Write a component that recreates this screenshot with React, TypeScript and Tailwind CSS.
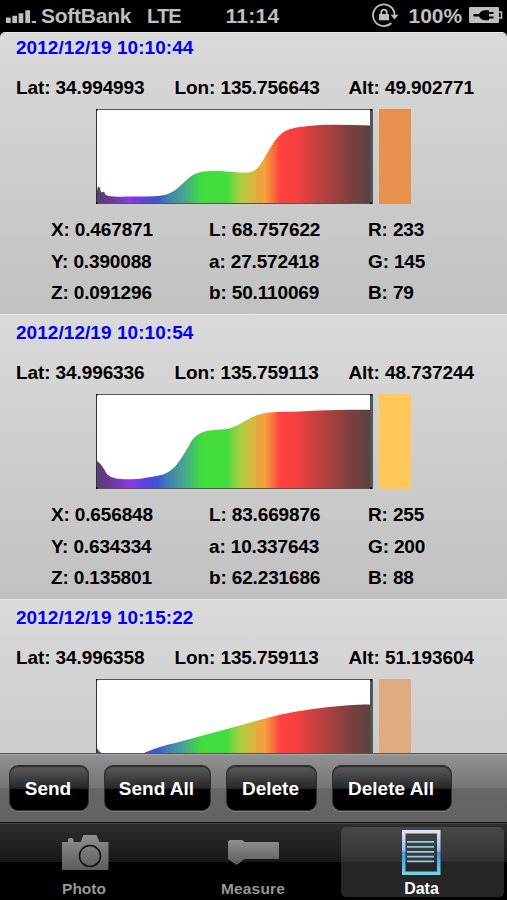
type Point = [number, number];

type Measurement = {
  date: string;
  lat: string;
  lon: string;
  alt: string;
  values: string[][];
  swatch: string;
  curve: Point[];
};

const measurements: Measurement[] = [
  {
    date: "2012/12/19 10:10:44",
    lat: "34.994993",
    lon: "135.756643",
    alt: "49.902771",
    values: [
      ["X: 0.467871", "L: 68.757622", "R: 233"],
      ["Y: 0.390088", "a: 27.572418", "G: 145"],
      ["Z: 0.091296", "b: 50.110069", "B: 79"]
    ],
    swatch: "#e8914f",
    curve: [
      [1, 82], [2, 78], [4, 79], [5, 83], [8, 83], [10, 86], [18, 87.5], [38, 87.5], [57, 87.3], [67, 86.3],
      [74, 84], [81, 79.7], [94, 68], [104, 63.3], [112, 62.3], [127, 62.2], [141, 63.3], [151, 63.6], [157, 62.2],
      [162, 58.5], [167, 51.3], [174, 39.6], [181, 29], [191, 21.3], [204, 18], [221, 16.2], [237, 15.8], [275, 16.5]
    ]
  },
  {
    date: "2012/12/19 10:10:54",
    lat: "34.996336",
    lon: "135.759113",
    alt: "48.737244",
    values: [
      ["X: 0.656848", "L: 83.669876", "R: 255"],
      ["Y: 0.634334", "a: 10.337643", "G: 200"],
      ["Z: 0.135801", "b: 62.231686", "B: 88"]
    ],
    swatch: "#ffc858",
    curve: [
      [1, 67], [4, 69.5], [8, 75], [11, 80], [16, 83.3], [24, 85], [41, 85], [51, 83.5], [67, 80.5], [77, 74.5],
      [84, 66], [91, 55], [97, 45], [106, 38.5], [114, 36.5], [131, 35], [141, 31.5], [151, 26], [162, 20.8],
      [174, 18.5], [204, 17.5], [231, 16.2], [275, 15.8]
    ]
  },
  {
    date: "2012/12/19 10:15:22",
    lat: "34.996358",
    lon: "135.759113",
    alt: "51.193604",
    values: [],
    swatch: "#dfac82",
    curve: [
      [1, 69], [4, 73], [20, 80], [40, 77], [49, 73.5], [64, 68], [94, 60], [131, 50], [167, 40], [184, 35.7],
      [217, 30], [244, 27], [261, 25.8], [275, 25.5]
    ]
  }
];

const spectrum: [number, string][] = [
  [0, "#54406c"], [16, "#6e38a0"], [34, "#8c38e6"], [48, "#5f42e0"], [62, "#3f55d4"], [72, "#4080b4"],
  [88, "#46a68c"], [100, "#42cc58"], [106, "#42dc3c"], [131, "#42dc3c"], [138, "#7ed440"], [146, "#b4cc40"],
  [156, "#d4b840"], [163, "#eaa63e"], [169, "#f8a040"], [177, "#fa7038"], [184, "#ff4040"], [198, "#fa403e"],
  [222, "#c24040"], [255, "#7c4040"], [275, "#584242"]
];

// Catmull-Rom through the sampled points, closed along the baseline
function areaPath(points: Point[]) {
  let d = `M1 94L${points[0][0]} ${points[0][1]}`;
  for (let i = 0; i < points.length - 1; i++) {
    const a = points[Math.max(i - 1, 0)];
    const b = points[i];
    const c = points[i + 1];
    const e = points[Math.min(i + 2, points.length - 1)];
    // tangents are scaled to the step so uneven samples do not overshoot
    const step = c[0] - b[0];
    const m1 = (c[1] - a[1]) / (c[0] - a[0]);
    const m2 = (e[1] - b[1]) / (e[0] - b[0]);
    d += `C${b[0] + step / 3} ${b[1] + (m1 * step) / 3} ${c[0] - step / 3} ${c[1] - (m2 * step) / 3} ${c[0]} ${c[1]}`;
  }
  return `${d}V94Z`;
}

function SpectrumChart({ curve, id }: { curve: Point[]; id: string }) {
  return (
    <svg className="block" width="277" height="95" viewBox="0 0 277 95">
      <defs>
        <linearGradient id={id} gradientUnits="userSpaceOnUse" x1="0" y1="0" x2="275" y2="0">
          {spectrum.map(([x, color]) => (
            <stop key={x} offset={x / 275} stopColor={color} />
          ))}
        </linearGradient>
      </defs>
      <rect width="277" height="95" fill="#fff" />
      <path d={areaPath(curve)} fill={`url(#${id})`} />
      <path d="M0 .5H277M0 94.5H277" stroke="#555" />
      <path d="M.5 0V95" stroke="#333" />
      <path d="M275.5 0V95" stroke="#555" strokeWidth="3" />
      <path d="M0 0H1.5V1.5H0ZM274 0H276V1.5H274ZM0 93.5H1.5V95H0ZM274 93.5H276V95H274Z" fill="#000" />
    </svg>
  );
}

function MeasurementRow({ item, index }: { item: Measurement; index: number }) {
  return (
    <section className="h-[285px] shrink-0 border-t border-[#e9e9e9] bg-linear-to-b from-[#dadada] to-[#c1c1c1] text-[19px] leading-[22px] font-bold tracking-[-0.1px] whitespace-nowrap text-black">
      <h2 className="pt-[7px] pl-4 tracking-[0.05px] text-[#0202ee]">{item.date}</h2>
      <div className="mt-[18px] grid grid-cols-[158.5px_174px_1fr] pl-4">
        <span>Lat: {item.lat}</span>
        <span>Lon: {item.lon}</span>
        <span>Alt: {item.alt}</span>
      </div>
      <div className="mt-[10px] ml-24 flex gap-[6px]">
        <SpectrumChart curve={item.curve} id={`spectrum-${index}`} />
        <div className="h-[95px] w-[32px]" style={{ backgroundColor: item.swatch }} />
      </div>
      <div className="mt-[15px] grid grid-cols-[158px_159px_1fr] gap-y-[9.5px] pl-[51px] tracking-[-0.15px]">
        {item.values.flat().map((value) => (
          <span key={value}>{value}</span>
        ))}
      </div>
    </section>
  );
}

function StatusBar() {
  return (
    <header className="flex h-8 shrink-0 items-center bg-black text-[21px] leading-8 font-bold whitespace-nowrap text-[#bfbfbf]">
      <svg className="ml-1.5 shrink-0" width="30" height="32" viewBox="0 0 30 32" fill="#bfbfbf">
        <path d="M0 17.500H4.700V23H0ZM6.300 15.700H11V23H6.300ZM12.600 13.300H17.300V23H12.600ZM19.300 10.300H24V23H19.300ZM25.700 21H30V23H25.700Z" />
      </svg>
      <span className="ml-[5px] w-[106px] tracking-[-0.25px]">SoftBank</span>
      <span className="w-[78.500px] text-[20px] tracking-[-0.8px]">LTE</span>
      <span className="w-[145px] tracking-[0.300px]">11:14</span>
      <svg className="shrink-0" width="29" height="32" viewBox="0 0 29 32">
        <path d="M20.300 23A10.800 10.800 0 1 1 23.600 15" fill="none" stroke="#bfbfbf" strokeWidth="1.800" />
        <path d="M19.500 14.800H27.500L23.500 19.500Z" fill="#bfbfbf" />
        <path d="M8 14H18V20.300H8Z" fill="#bfbfbf" />
        <path d="M10.300 14V12.300A2.700 2.700 0 0 1 15.700 12.300V14" fill="none" stroke="#bfbfbf" strokeWidth="1.800" />
      </svg>
      <span className="ml-[9px] w-[60px]">100%</span>
      <svg className="shrink-0" width="34" height="32" viewBox="0 0 34 32">
        <path d="M0 8Q0 7 1 7H29Q30 7 30 8V22Q30 23 29 23H1Q0 23 0 22Z" fill="#bfbfbf" />
        <path d="M30 12H32.500V18H30" fill="none" stroke="#bfbfbf" strokeWidth="1.500" />
        <path d="M4.500 14H10Q12 10.500 16 10.300H20V12H24.500V14H20V16.500H24.500V18.500H20V20.200H16Q12 20 10 16.500H4.500Z" fill="#000" />
      </svg>
    </header>
  );
}

function Toolbar() {
  const button =
    "h-[46px] rounded-[9px] border border-[#303030] bg-[linear-gradient(#5c5c5c_0%,#262626_51%,#000_52%,#000_100%)] pt-0.5 pr-0.5 text-[19px] font-bold text-white shadow-[0_1px_0_#808080,inset_0_1px_1px_#222]";

  return (
    <div className="flex h-[70px] shrink-0 items-start border-t border-b border-t-[#555] border-b-[#111] bg-[linear-gradient(#929292,#757575_50%,#666_51%,#626262)] pt-[11px] pl-[9px] shadow-[inset_0_1px_0_#a5a5a5]">
      <button className={`${button} w-20`}>Send</button>
      <button className={`${button} ml-[15px] w-[107px]`}>Send All</button>
      <button className={`${button} ml-[15px] w-[91px]`}>Delete</button>
      <button className={`${button} ml-[15px] w-[120px]`}>Delete All</button>
    </div>
  );
}

function TabBar() {
  return (
    <nav className="grid h-[77px] shrink-0 grid-cols-3 border-t border-[#444] bg-[linear-gradient(#2e2e2e_0%,#171717_50%,#000_50%,#000_100%)] text-center text-[15.500px] leading-5 font-bold text-[#969696]">
      <div className="flex flex-col items-center">
        <svg className="mt-[10px] shrink-0" width="48" height="37" viewBox="0 0 48 37">
          <defs>
            <linearGradient id="gray" x1="0" y1="0" x2="0" y2="1">
              <stop offset="0" stopColor="#909090" />
              <stop offset="1" stopColor="#5c5c5c" />
            </linearGradient>
          </defs>
          <path d="M1 8H7V5L8.500 4H11L12.500 5V8H19.500L22.500 1H35.500L38.500 8H47.500V36H1Z" fill="url(#gray)" />
          <circle cx="29" cy="22" r="10.500" fill="none" stroke="#111" strokeWidth="1.600" />
        </svg>
        <span className="mt-[8px] mr-px">Photo</span>
      </div>
      <div className="flex flex-col items-center">
        <svg className="mt-[15px] shrink-0" width="53" height="27" viewBox="0 0 53 27">
          <path d="M1 2L3 1H15L18 3H51L52 4V20H17.500L9.500 26L1 20Z" fill="url(#gray)" />
        </svg>
        <span className="mt-[13px] mr-px tracking-[0.150px]">Measure</span>
      </div>
      <div className="mt-[3px] mr-[3px] ml-[3px] flex h-[70px] flex-col items-center rounded-[5px] bg-[linear-gradient(#474747_0%,#333_49%,#262626_50%,#262626_100%)] text-white">
        <svg className="mt-[2px] mr-[3px] shrink-0" width="40" height="47" viewBox="0 0 40 47">
          <defs>
            <linearGradient id="blue" x1="0" y1="0" x2="0" y2="1">
              <stop offset="0" stopColor="#e4e6fa" />
              <stop offset=".45" stopColor="#98c0ec" />
              <stop offset=".5" stopColor="#3c98e0" />
              <stop offset="1" stopColor="#6cd8f0" />
            </linearGradient>
          </defs>
          <path d="M1 1H39.500V46H1ZM4.500 4.500V42.500H36V4.500Z" fill="url(#blue)" fillRule="evenodd" />
          <path d="M6 12H33V13.800H6ZM6 17H33V18.800H6ZM6 22H33V23.800H6ZM6 26.700H33V28.500H6ZM6 31.500H33V33.300H6Z" fill="#90cce8" />
        </svg>
        <span className="mt-[3px] mr-[2px] text-[16px]">Data</span>
      </div>
    </nav>
  );
}

export default function App() {
  return (
    <div className="flex h-[900px] w-[507px] flex-col overflow-hidden bg-black font-['Liberation_Sans',Arial,sans-serif]">
      <StatusBar />
      <main className="min-h-0 flex-1 overflow-hidden rounded-t-[5px] border-t border-[#e9e9e9]">
        {/* list is scrolled by a few pixels */}
        <div className="-mt-[4px] flex flex-col">
          {measurements.map((item, index) => (
            <MeasurementRow key={item.date} item={item} index={index} />
          ))}
        </div>
      </main>
      <Toolbar />
      <TabBar />
    </div>
  );
}
